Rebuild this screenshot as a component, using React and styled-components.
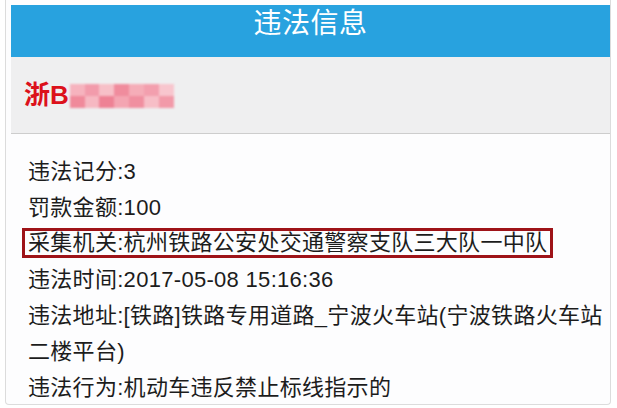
import styled, { createGlobalStyle } from 'styled-components';

const GlobalStyle = createGlobalStyle`
  html, body {
    margin: 0;
    padding: 0;
    background: #ffffff;
  }
  body {
    font-family: "Liberation Sans", "Noto Sans CJK SC", sans-serif;
  }
`;

const Card = styled.div`
  box-sizing: border-box;
  width: 606px;
  height: 405px;
  margin-left: 5px;
  border: 1px solid #dcdcdc;
  border-top: none;
  border-radius: 0 0 4px 4px;
  background: #fdfdfe;
  overflow: hidden;
`;

const Header = styled.div`
  box-sizing: border-box;
  height: 52px;
  margin: 5px 0 0 5px;
  padding-top: 2px;
  background: #28a2df;
  color: #ffffff;
  text-align: center;
  font-size: 28px;
  line-height: 34px;
  letter-spacing: 0.5px;
`;

const PlateBar = styled.div`
  box-sizing: border-box;
  display: flex;
  align-items: center;
  height: 77px;
  margin-left: 5px;
  padding: 0 0 0 13px;
  background: #efeff0;
  border-bottom: 1px solid #cdcdcd;
`;

const Plate = styled.span`
  color: #dc111b;
  font-size: 26px;
  font-weight: 700;
  line-height: 30px;
`;

const Blur = styled.span`
  display: inline-grid;
  grid-template-columns: repeat(7, 1fr);
  width: 104px;
  height: 24px;
  margin: 2px 0 0 1px;
  filter: blur(1.2px);
`;

const BlurCell = styled.span`
  background: ${(p) => p.$c};
`;

const Content = styled.div`
  padding: 20px 0 0 16px;
  color: #1c1c1c;
  font-size: 22px;
  letter-spacing: 0.3px;
`;

const Row = styled.div`
  padding-left: 6px;
  padding-right: 4px;
  line-height: 36px;
`;

const MarkedRow = styled.div`
  display: inline-block;
  margin: 2px 0 4px;
  padding: 0 3px;
  border: 3px solid #9e1318;
  line-height: 24px;
`;

const blurColors = [
  '#f6b3be', '#f29bab', '#f7c0c8', '#f08c9d', '#f5adb8', '#f39fae', '#f8c6ce',
  '#f08a9b', '#f6b8c2', '#ee8295', '#f4a5b2', '#f08fa0', '#f7bec7', '#f29aa9',
];

export default function App() {
  return (
    <>
      <GlobalStyle />
      <Card>
        <Header>违法信息</Header>
        <PlateBar>
          <Plate>浙B</Plate>
          <Blur>
            {blurColors.map((c, i) => (
              <BlurCell key={i} $c={c} />
            ))}
          </Blur>
        </PlateBar>
        <Content>
          <Row>违法记分:3</Row>
          <Row>罚款金额:100</Row>
          <MarkedRow>采集机关:杭州铁路公安处交通警察支队三大队一中队</MarkedRow>
          <Row>违法时间:2017-05-08 15:16:36</Row>
          <Row>违法地址:[铁路]铁路专用道路_宁波火车站(宁波铁路火车站二楼平台)</Row>
          <Row>违法行为:机动车违反禁止标线指示的</Row>
        </Content>
      </Card>
    </>
  );
}
